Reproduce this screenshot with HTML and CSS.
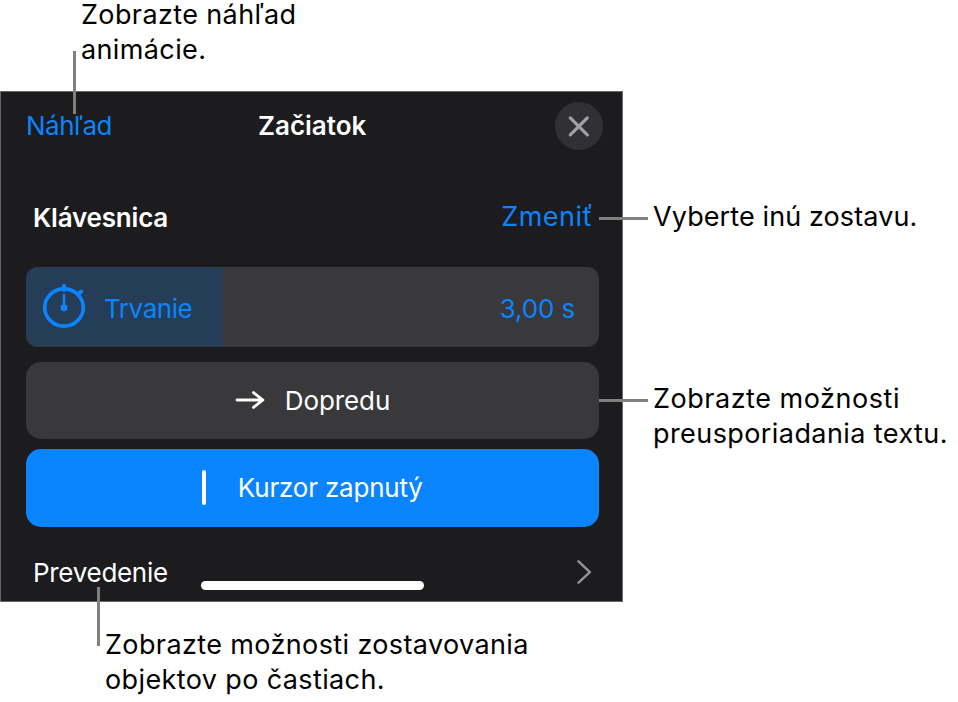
FILE: index.html
```
<!DOCTYPE html>
<html lang="sk">
<head>
<meta charset="utf-8">
<title>Začiatok</title>
<link rel="stylesheet" href="styles.css">
</head>
<body>
<main class="figure">
  <p class="caption caption-top"><span class="c1">Zobrazte náhľad</span><br><span class="c2">animácie.</span></p>
  <div class="middle">
    <section class="panel">
      <header class="bar">
        <a class="link preview">Náhľad</a>
        <h1 class="title">Začiatok</h1>
        <button class="close" aria-label="Zavrieť">
          <svg width="48" height="48" viewBox="0 0 48 48"><path d="M15.3 15.9l17 17M32.3 15.9l-17 17" stroke="#a1a0a8" stroke-width="3.2" stroke-linecap="round"/></svg>
        </button>
      </header>
      <div class="effect">
        <h2 class="effect-name">Klávesnica</h2>
        <a class="link change">Zmeniť</a>
      </div>
      <div class="slider">
        <div class="fill">
          <svg class="timer" width="44" height="46" viewBox="0 0 44 46" fill="none" stroke="#0a84ff" stroke-linecap="round"><ellipse cx="22" cy="24.5" rx="19.3" ry="18.6" stroke-width="3.6"/><path d="M22 3v4M36.5 10.8l2.7-2.3" stroke-width="4"/><path d="M22 12v12" stroke-width="2.6"/><circle cx="22" cy="24.8" r="3.5" fill="#0a84ff" stroke="none"/></svg>
          <span class="duration">Trvanie</span>
        </div>
        <span class="value">3,00 s</span>
      </div>
      <button class="option forward">
        <svg width="30" height="20" viewBox="0 0 30 20" fill="none" stroke="#fff" stroke-width="2.8" stroke-linecap="round" stroke-linejoin="round"><path d="M2 10h26M18.5 2.6l9.3 7.4-9.3 7.4"/></svg>
        <span class="forward-text">Dopredu</span>
      </button>
      <button class="option cursor">
        <i class="caret"></i>
        <span class="cursor-text">Kurzor zapnutý</span>
      </button>
      <div class="delivery">
        <span class="delivery-text">Prevedenie</span>
        <svg width="16" height="26" viewBox="0 0 16 26" fill="none" stroke="#929297" stroke-width="2.4" stroke-linecap="round" stroke-linejoin="round"><path d="M1.5 2.3l11.4 10.8-11.4 10.6"/></svg>
      </div>
      <i class="home"></i>
    </section>
    <aside class="side">
      <p class="caption caption-change"><span class="c3">Vyberte inú zostavu.</span></p>
      <p class="caption"><span class="c4">Zobrazte možnosti</span><br><span class="c5">preusporiadania textu.</span></p>
    </aside>
  </div>
  <p class="caption caption-bottom"><span class="c6">Zobrazte možnosti zostavovania</span><br><span class="c7">objektov po častiach.</span></p>
  <i class="leader leader-preview"></i>
  <i class="leader leader-change"></i>
  <i class="leader leader-text"></i>
  <i class="leader leader-delivery"></i>
</main>
</body>
</html>
```
FILE: styles.css
```
* { box-sizing: border-box; margin: 0; }
body { background: #fff; color: #000; font: 27px/35px Inter, "Liberation Sans", sans-serif; overflow: hidden; }
span, a, h1, h2 { white-space: nowrap; }
.figure { position: relative; width: 958px; height: 702px; display: flex; flex-direction: column; overflow: hidden; }
.caption { letter-spacing: 0.38px; }
.caption-top { height: 91px; padding-left: 81px; }
.caption-top span { position: relative; top: -3px; }
.c3 { letter-spacing: 0.1px; }
.c4 { letter-spacing: 0.53px; }
.c5 { letter-spacing: 0.42px; }
.middle { display: flex; height: 511px; }
.panel { position: relative; width: 623px; padding: 10px 23px 0 25px; display: flex; flex-direction: column; background: #1c1c1e; border: 1px solid #68686a; }
.bar { display: grid; grid-template-columns: 232px 1fr 48px; align-items: center; height: 48px; margin-right: -4.4px; }
.link { color: #0a84ff; }
.bar .link, .title { line-height: 48px; font-size: 26px; }
.preview { letter-spacing: -0.5px; }
.title, .effect-name { font-size: 26px; font-weight: 600; color: #fff; }
.effect-name { letter-spacing: -0.2px; padding-top: 1px; }
.change { letter-spacing: 0.45px; }
button { border: 0; font: inherit; padding: 0; }
.close { width: 48px; height: 48px; border-radius: 50%; background: #313135; }
.close svg { display: block; }
.effect { display: flex; justify-content: space-between; margin: 49px 6px 0 7px; height: 35px; }
.slider { display: flex; align-items: center; justify-content: space-between; height: 80px; margin-top: 32.6px; width: 573px; border-radius: 12px; background: #39393b; color: #0a84ff; overflow: hidden; font-size: 26px; }
.fill { display: flex; align-items: center; gap: 18px; width: 196.5px; height: 80px; padding-left: 16px; background: #253d56; }
.timer { flex: none; margin-top: -2px; }
.duration, .value { padding-top: 3px; }
.duration { letter-spacing: -0.45px; }
.value { margin-right: 24px; letter-spacing: -0.15px; }
.option { display: flex; align-items: center; justify-content: center; width: 573px; height: 77.6px; border-radius: 15px; color: #fff; font-size: 26px; }
.forward { margin-top: 15px; gap: 20px; background: #39393b; }
.forward-text { letter-spacing: -0.1px; }
.cursor { margin-top: 9.8px; gap: 32px; background: #0a84ff; }
.cursor-text { letter-spacing: -0.2px; }
.caret { width: 3.6px; height: 35px; border-radius: 2px; background: #fff; }
.delivery { display: flex; justify-content: space-between; align-items: center; margin: 28.4px 6px 0 7px; color: #fff; font-size: 26px; }
.delivery-text { letter-spacing: -0.3px; }
.home { position: absolute; left: 200px; bottom: 11px; width: 223px; height: 9px; border-radius: 5px; background: #fff; }
.side { padding: 108px 0 0 30px; }
.caption-change { margin-bottom: 147px; }
.caption-bottom { padding: 25px 0 0 105px; }
.leader { position: absolute; background: #808080; }
.leader-preview { left: 73px; top: 51px; width: 3px; height: 63px; }
.leader-change { left: 599px; top: 217px; width: 49px; height: 3px; }
.leader-text { left: 599px; top: 399px; width: 49px; height: 3px; }
.leader-delivery { left: 97px; top: 587px; width: 3px; height: 59px; }
```
